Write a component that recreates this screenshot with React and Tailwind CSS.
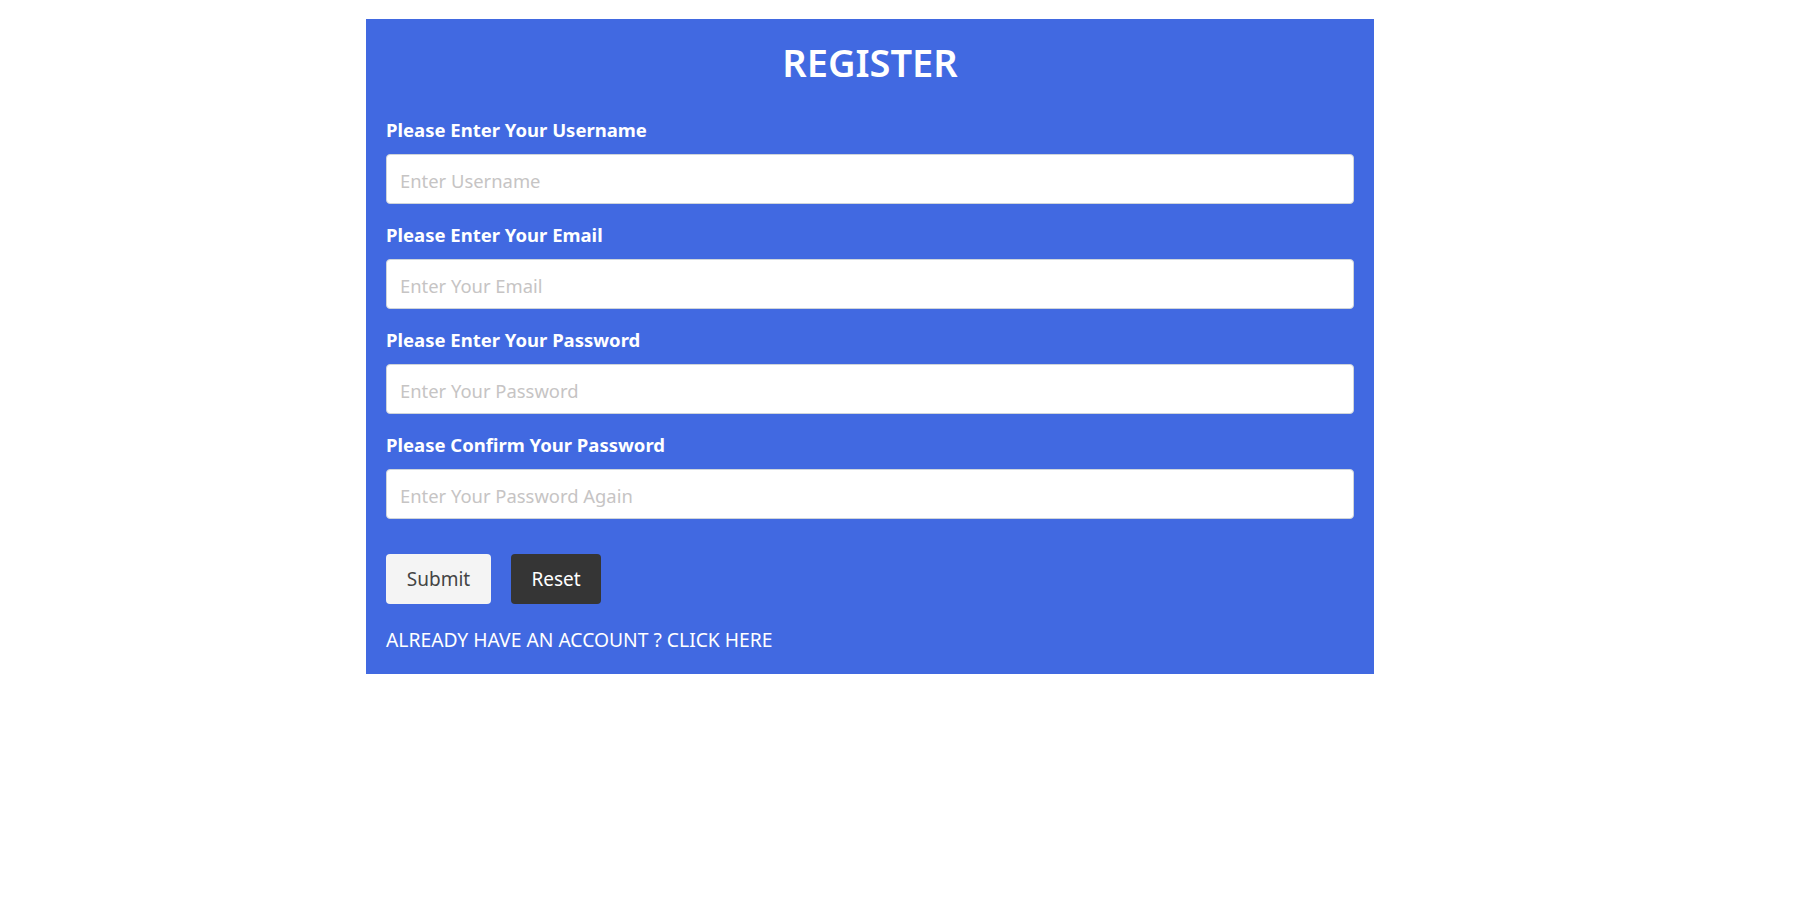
export default function App() {
  const fields = [
    ["Please Enter Your Username", "Enter Username", "text"],
    ["Please Enter Your Email", "Enter Your Email", "email"],
    ["Please Enter Your Password", "Enter Your Password", "password"],
    ["Please Confirm Your Password", "Enter Your Password Again", "password"],
  ];
  return (
    <div className="w-full min-h-[899px] bg-white" style={{ fontFamily: '"Noto Sans", "Open Sans", sans-serif' }}>
      <div className="ml-[366px] mt-[19px] w-[1008px] bg-[#4169e1] px-[20px] pt-[19px] pb-[20px]">
        <h1 className="text-center text-[38px] leading-[48px] font-semibold text-white">REGISTER</h1>
        <div className="mt-[32px] flex flex-col">
          {fields.map(([label, ph, type], i) => (
            <div key={i} className="flex flex-col">
              <label className="text-[18.5px] leading-[24px] font-bold text-white mb-[12px]">{label}</label>
              <input
                type={type}
                placeholder={ph}
                className="h-[50px] w-full rounded-[4px] border border-[#ced4da] bg-white px-[13px] pt-[2px] text-[18.4px] text-[#495057] placeholder:text-[#c6c4c4] outline-none mb-[19px]"
              />
            </div>
          ))}
        </div>
        <div className="mt-[16px] flex gap-[20px]">
          <button className="h-[50px] w-[105px] rounded-[4px] bg-[#f4f4f4] text-[19px] text-[#444]">Submit</button>
          <button className="h-[50px] w-[90px] rounded-[4px] bg-[#353535] text-[19px] text-white">Reset</button>
        </div>
        <div className="mt-[22px] text-[19.3px] leading-[28px] text-white">ALREADY HAVE AN ACCOUNT ? CLICK HERE</div>
      </div>
    </div>
  );
}
